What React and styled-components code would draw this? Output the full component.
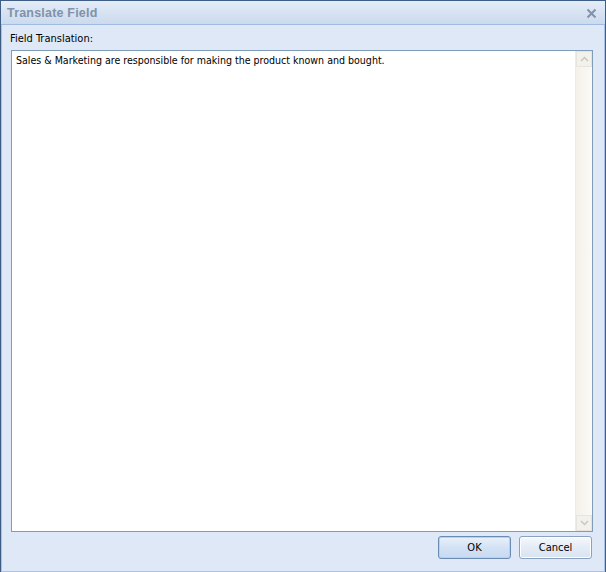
import React from "react";
import styled, { createGlobalStyle } from "styled-components";

const Global = createGlobalStyle`
  html, body { margin: 0; padding: 0; background: #dfe8f6; }
  body { font-family: Tahoma, "DejaVu Sans Condensed", "Liberation Sans", sans-serif; }
`;

const uiFont = `Tahoma, "DejaVu Sans Condensed", "Liberation Sans", sans-serif`;

const Window = styled.div`
  box-sizing: border-box;
  width: 606px;
  height: 572px;
  border: 1px solid #3e5d84;
  background: #dfe8f6;
  display: flex;
  flex-direction: column;
`;

const TitleBar = styled.div`
  box-sizing: border-box;
  height: 24px;
  flex: none;
  display: flex;
  align-items: center;
  justify-content: space-between;
  padding: 0 8px 0 6px;
  background: linear-gradient(#e4ecf7, #cbdaee);
  border-bottom: 1px solid #9fbbe0;
`;

const Title = styled.span`
  font-family: "Liberation Sans", Arial, sans-serif;
  font-weight: bold;
  font-size: 12.5px;
  color: #8192a9;
  letter-spacing: 0.2px;
`;

const Close = styled.svg`
  width: 11px;
  height: 11px;
  margin-top: 1px;
`;

const Body = styled.div`
  flex: 1;
  box-sizing: border-box;
  display: flex;
  flex-direction: column;
  padding: 6px 11px 12px 9px;
  border-left: 1px solid #a9c2e6;
  border-right: 1px solid #a9c2e6;
  border-bottom: 1px solid #a9c2e6;
`;

const Label = styled.div`
  font-family: ${uiFont};
  font-size: 11px;
  color: #000;
  height: 19px;
  line-height: 15px;
  margin-left: -1px;
`;

const Field = styled.div`
  display: flex;
  border: 1px solid #7f9db9;
  background: #fff;
  height: 482px;
  box-sizing: border-box;
  flex: none;
`;

const Text = styled.div`
  flex: 1;
  padding: 3px 4px;
  font-family: ${uiFont};
  font-size: 10.55px;
  color: #000;
`;

const Scroll = styled.div`
  width: 16px;
  display: flex;
  flex-direction: column;
  background: linear-gradient(90deg, #f3f1e9, #fbfaf6);
  border-left: 1px solid #ecebe4;
`;

const Arrow = styled.div`
  height: 16px;
  display: flex;
  align-items: center;
  justify-content: center;
  background: #f2f1ec;
  border: 1px solid #e6e4dc;
  box-sizing: border-box;
`;

const Track = styled.div`
  flex: 1;
`;

const Footer = styled.div`
  display: flex;
  justify-content: flex-end;
  gap: 8px;
  margin-top: 4px;
  margin-right: 1px;
`;

const Button = styled.button`
  width: 73px;
  height: 23px;
  box-sizing: border-box;
  border: 1px solid ${(p) => (p.$default ? "#6a8bb6" : "#8aa2c0")};
  border-radius: 3px;
  background: ${(p) =>
    p.$default
      ? "linear-gradient(#e9f1fb, #d3e2f4 50%, #c7daf1)"
      : "linear-gradient(#f6f9fd, #e3ebf6 50%, #d9e4f2)"};
  box-shadow: inset 0 0 0 1px ${(p) => (p.$default ? "#b9d0ee" : "#ffffff")};
  font-family: ${uiFont};
  font-size: 11px;
  color: #000;
  padding: 0;
`;

export default function App() {
  return (
    <>
      <Global />
      <Window>
        <TitleBar>
          <Title>Translate Field</Title>
          <Close viewBox="0 0 11 11">
            <path d="M1.5 1.5 L9.5 9.5 M9.5 1.5 L1.5 9.5" stroke="#8192a9" strokeWidth="2" />
          </Close>
        </TitleBar>
        <Body>
          <Label>Field Translation:</Label>
          <Field>
            <Text>Sales &amp; Marketing are responsible for making the product known and bought.</Text>
            <Scroll>
              <Arrow>
                <svg width="9" height="6" viewBox="0 0 9 6">
                  <path d="M1 5 L4.5 1.5 L8 5" fill="none" stroke="#c9c8c0" strokeWidth="1.5" />
                </svg>
              </Arrow>
              <Track />
              <Arrow>
                <svg width="9" height="6" viewBox="0 0 9 6">
                  <path d="M1 1 L4.5 4.5 L8 1" fill="none" stroke="#c9c8c0" strokeWidth="1.5" />
                </svg>
              </Arrow>
            </Scroll>
          </Field>
          <Footer>
            <Button $default>OK</Button>
            <Button>Cancel</Button>
          </Footer>
        </Body>
      </Window>
    </>
  );
}
